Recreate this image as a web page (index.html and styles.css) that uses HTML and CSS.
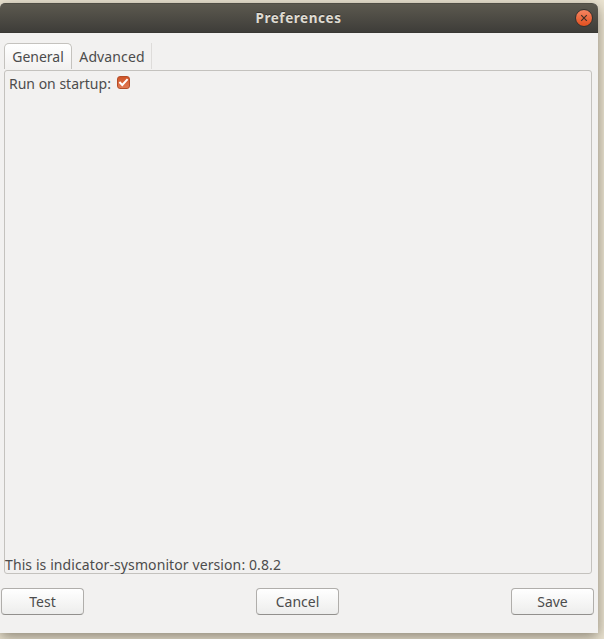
FILE: index.html
```html
<!DOCTYPE html>
<html lang="en">
<head>
<meta charset="utf-8">
<title>Preferences</title>
<link rel="stylesheet" href="styles.css">
</head>
<body>
<main class="window">
  <header class="titlebar">
    <h1 class="title">Preferences</h1>
    <button class="close" aria-label="Close">
      <svg width="18" height="18" viewBox="0 0 18 18"><path d="M6.2 6.2l5.6 5.6M11.8 6.2l-5.6 5.6" stroke="#403027" stroke-width="1.2" fill="none"/></svg>
    </button>
  </header>
  <nav class="tabs">
    <button class="tab active">General</button>
    <button class="tab advanced">Advanced</button>
  </nav>
  <section class="panel">
    <div class="option">
      <span>Run on startup:</span>
      <span class="check">
        <svg width="13" height="13" viewBox="0 0 13 13"><path d="M2.4 6l2.9 3 5.3-5.8" stroke="#fff" stroke-width="2" fill="none"/></svg>
      </span>
    </div>
    <p class="version">This is indicator-sysmonitor version: 0.8.2</p>
  </section>
  <footer class="actions">
    <button class="btn">Test</button>
    <button class="btn">Cancel</button>
    <button class="btn">Save</button>
  </footer>
</main>
</body>
</html>
```
FILE: styles.css
```css
* { box-sizing: border-box; }
body {
  margin: 0;
  height: 639px;
  padding-top: 3px;
  overflow: hidden;
  background: #ece5d3;
  font: 14px/20px "Noto Sans", "Open Sans", sans-serif;
  color: #4c4c4c;
}
button { font: inherit; color: inherit; padding: 0; margin: 0; border: 0; background: none; }
.window {
  width: 598px;
  height: 630px;
  background: #f2f1f0;
  border-radius: 5px 6px 0 0;
  box-shadow: 0 4px 14px rgba(60, 52, 40, .55);
}
.titlebar {
  height: 30px;
  display: grid;
  grid-template-columns: 28px 1fr 28px;
  align-items: center;
  background: linear-gradient(#5c594f, #3e3d39);
  border-top: 1px solid #504e45;
  border-bottom: 1px solid #393834;
  border-radius: 5px 6px 0 0;
}
.title {
  grid-column: 2;
  margin: 0;
  padding-right: 1px;
  text-align: center;
  font-size: 13.5px;
  line-height: 20px;
  font-weight: 700;
  letter-spacing: .55px;
  color: #dfdbd2;
  text-shadow: 0 -1px #33322f;
}
.close {
  width: 18px;
  height: 18px;
  margin-left: 5px;
  border-radius: 50%;
  border: 1px solid #35332f;
  background: linear-gradient(#f58562, #e2501f);
  display: flex;
  align-items: center;
  justify-content: center;
}
.close svg { flex: none; }
.tabs { display: flex; height: 37px; padding: 10px 0 0 4px; }
.tab {
  height: 26px;
  width: 80px;
  border-right: 1px solid #dedcda;
  display: flex;
  align-items: center;
  justify-content: center;
  white-space: nowrap;
}
.tab.advanced { letter-spacing: .12px; padding: 2px 0 0 1px; }
.tab.active {
  width: 68px;
  border: 1px solid #c4c2be;
  border-bottom: 0;
  border-radius: 5px 5px 0 0;
  background: linear-gradient(#fff, #f2f1f0);
}
.panel {
  margin: 0 6px 0 4px;
  height: 504px;
  border: 1px solid #c4c2be;
  border-radius: 3px;
  display: flex;
  flex-direction: column;
  justify-content: space-between;
}
.option { display: flex; align-items: center; height: 26px; padding-left: 4px; gap: 6px; }
.check {
  width: 13px;
  height: 13px;
  border: 1px solid #b54d27;
  border-radius: 3px;
  background: linear-gradient(#cf5427, #e17b54);
  display: flex;
  align-items: center;
  justify-content: center;
  margin-top: -3px;
}
.check svg { flex: none; }
.version { margin: 0 0 -2px; white-space: nowrap; letter-spacing: .1px; }
.actions { display: flex; justify-content: space-between; padding: 14px 4px 0 1px; }
.btn {
  width: 83px;
  height: 27px;
  border: 1px solid #b0aeab;
  border-bottom-color: #92908d;
  border-radius: 4px;
  background: linear-gradient(#fff, #ededec);
}
```
